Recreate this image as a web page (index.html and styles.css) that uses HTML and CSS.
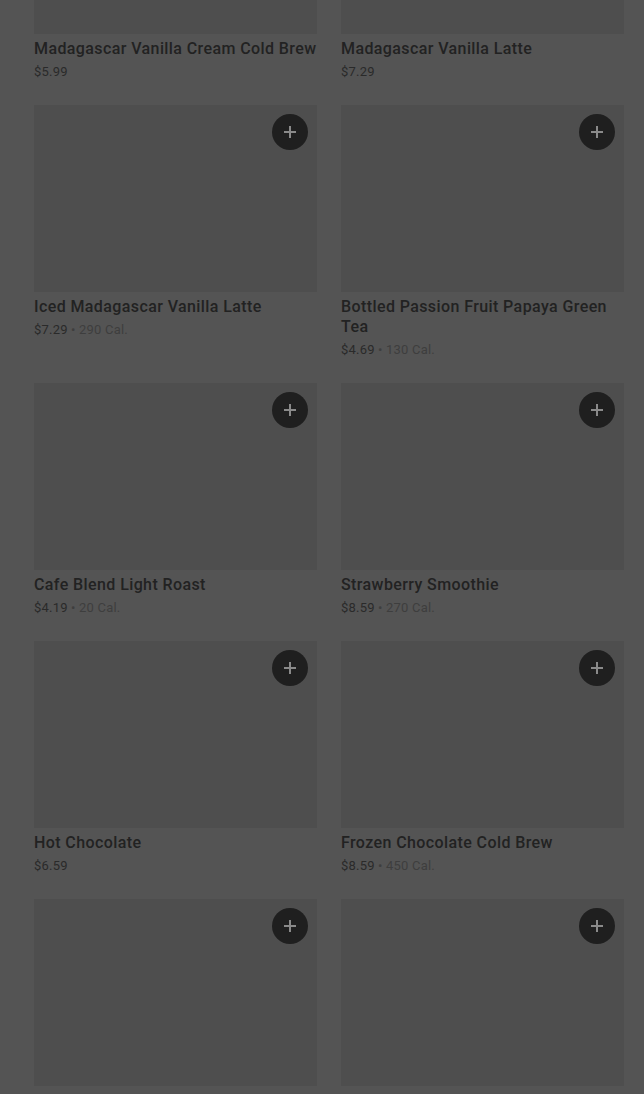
FILE: index.html
```html
<html>
  <head>
    <title>Menu</title>
    <link rel="stylesheet" href="styles.css">
  </head>
  <body>
    <section class="menu-grid">
      <div class="menu-item">
        <div class="item-image"></div>
        <div class="item-title">Madagascar Vanilla Cream Cold Brew</div>
        <div class="item-meta"><span class="item-price">$5.99</span></div>
      </div>
      <div class="menu-item">
        <div class="item-image"></div>
        <div class="item-title">Madagascar Vanilla Latte</div>
        <div class="item-meta"><span class="item-price">$7.29</span></div>
      </div>

      <div class="menu-item">
        <div class="item-image"><button class="add-button"><svg viewBox="0 0 12 12"><path d="M6 0v12M0 6h12"/></svg></button></div>
        <div class="item-title">Iced Madagascar Vanilla Latte</div>
        <div class="item-meta"><span class="item-price">$7.29</span> • <span class="item-cal">290 Cal.</span></div>
      </div>
      <div class="menu-item">
        <div class="item-image"><button class="add-button"><svg viewBox="0 0 12 12"><path d="M6 0v12M0 6h12"/></svg></button></div>
        <div class="item-title">Bottled Passion Fruit Papaya Green Tea</div>
        <div class="item-meta"><span class="item-price">$4.69</span> • <span class="item-cal">130 Cal.</span></div>
      </div>

      <div class="menu-item">
        <div class="item-image"><button class="add-button"><svg viewBox="0 0 12 12"><path d="M6 0v12M0 6h12"/></svg></button></div>
        <div class="item-title">Cafe Blend Light Roast</div>
        <div class="item-meta"><span class="item-price">$4.19</span> • <span class="item-cal">20 Cal.</span></div>
      </div>
      <div class="menu-item">
        <div class="item-image"><button class="add-button"><svg viewBox="0 0 12 12"><path d="M6 0v12M0 6h12"/></svg></button></div>
        <div class="item-title">Strawberry Smoothie</div>
        <div class="item-meta"><span class="item-price">$8.59</span> • <span class="item-cal">270 Cal.</span></div>
      </div>

      <div class="menu-item">
        <div class="item-image"><button class="add-button"><svg viewBox="0 0 12 12"><path d="M6 0v12M0 6h12"/></svg></button></div>
        <div class="item-title">Hot Chocolate</div>
        <div class="item-meta"><span class="item-price">$6.59</span></div>
      </div>
      <div class="menu-item">
        <div class="item-image"><button class="add-button"><svg viewBox="0 0 12 12"><path d="M6 0v12M0 6h12"/></svg></button></div>
        <div class="item-title">Frozen Chocolate Cold Brew</div>
        <div class="item-meta"><span class="item-price">$8.59</span> • <span class="item-cal">450 Cal.</span></div>
      </div>

      <div class="menu-item">
        <div class="item-image"><button class="add-button"><svg viewBox="0 0 12 12"><path d="M6 0v12M0 6h12"/></svg></button></div>
      </div>
      <div class="menu-item">
        <div class="item-image"><button class="add-button"><svg viewBox="0 0 12 12"><path d="M6 0v12M0 6h12"/></svg></button></div>
      </div>
    </section>
  </body>
</html>
```

FILE: styles.css
```css
html, body {
  margin: 0;
  height: 100%;
  overflow: hidden;
}

body {
  background-color: #545454;
  font-family: Roboto, "Noto Sans", sans-serif;
}

.menu-grid {
  display: grid;
  grid-template-columns: 283px 283px;
  column-gap: 24px;
  row-gap: 24px;
  padding-left: 34px;
  margin-top: -153px;
  align-items: start;

  .menu-item {
    display: flex;
    flex-direction: column;
  }

  .item-image {
    position: relative;
    height: 187px;
    background-color: #4e4e4e;
  }

  .add-button {
    position: absolute;
    top: 9px;
    right: 9px;
    width: 36px;
    height: 36px;
    border-radius: 50%;
    border: none;
    background-color: #1f1f1f;
    padding: 0;
    display: flex;
    align-items: center;
    justify-content: center;

    svg {
      width: 12px;
      height: 12px;
      stroke: #8a8a8a;
      stroke-width: 2;
    }
  }

  .item-title {
    margin-top: 5px;
    font-size: 16px;
    line-height: 20px;
    font-weight: 500;
    letter-spacing: 0.4px;
    color: #222222;
  }

  .item-meta {
    margin-top: 4px;
    font-size: 13px;
    line-height: 18px;
    letter-spacing: 0.2px;
    color: #3e3e3e;
  }

  .item-price {
    color: #2a2a2a;
  }
}
```
